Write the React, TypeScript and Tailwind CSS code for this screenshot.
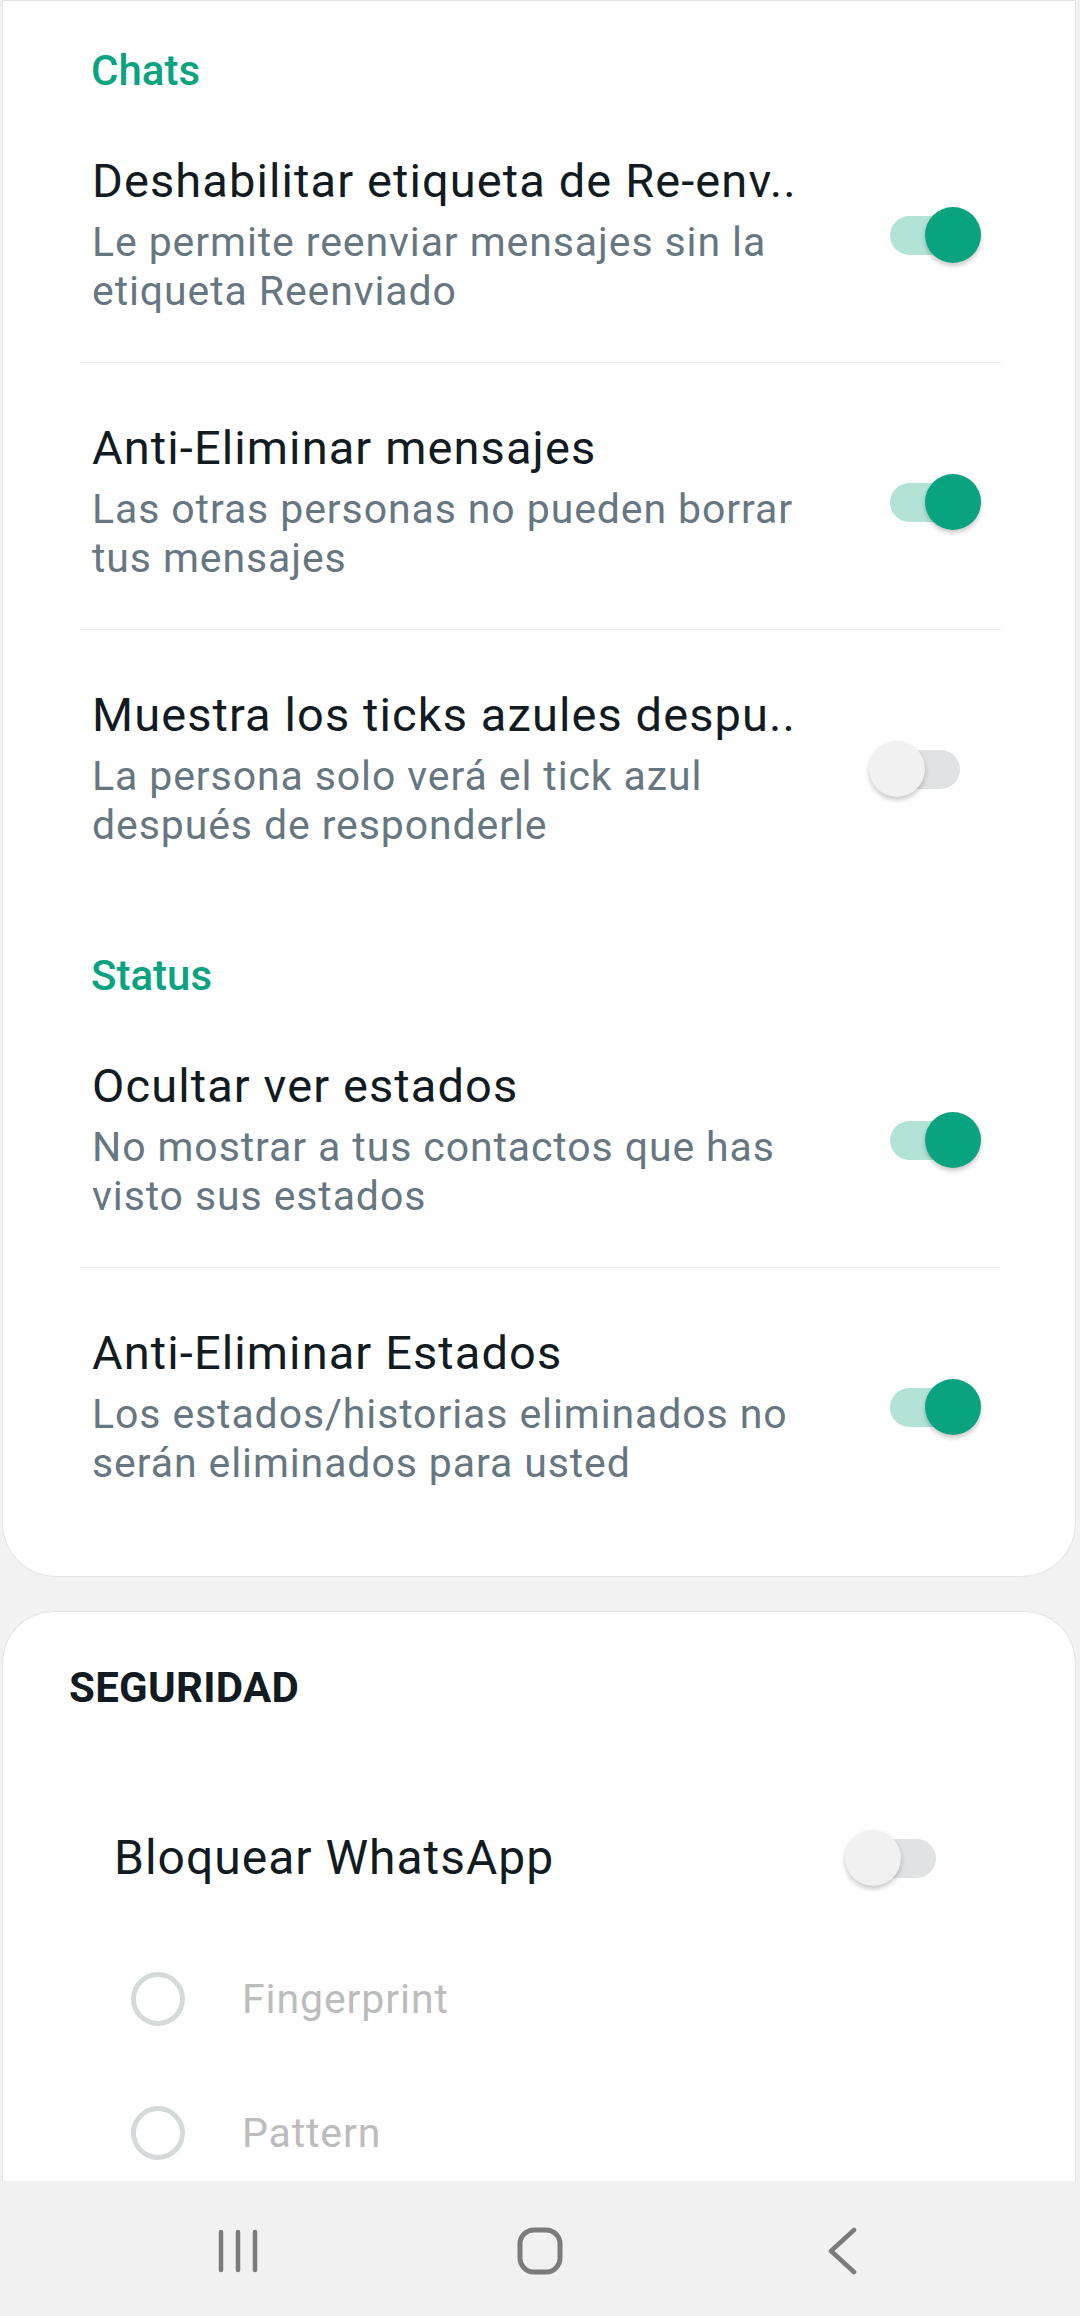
import React from "react";

function Switch({ on }: { on: boolean }) {
  return (
    <div className="relative w-[112px] h-[56px] shrink-0">
      <div
        className={`absolute left-[21px] top-[9px] w-[70px] h-[39px] rounded-full ${
          on ? "bg-[#b3e3d7]" : "bg-[#e0e2e3]"
        }`}
      />
      <div
        className={`absolute top-0 w-[56px] h-[56px] rounded-full shadow-[0_3px_5px_rgba(0,0,0,0.22)] ${
          on ? "left-[56px] bg-[#0aa37f]" : "left-0 bg-[#f1f1f1]"
        }`}
      />
    </div>
  );
}

function Row({ title, lines, on }: { title: string; lines: string[]; on: boolean }) {
  return (
    <div className="flex items-center pt-[57px] pb-[46px]">
      <div className="flex-1 min-w-0 pl-[89px]">
        <div className="text-[47px] leading-[56px] tracking-[1.1px] text-[#111b21] whitespace-nowrap">{title}</div>
        <div className="mt-[9px] text-[41px] leading-[49px] tracking-[0.9px] text-[#667781]">
          {lines.map((l) => (
            <div key={l} className="whitespace-nowrap">
              {l}
            </div>
          ))}
        </div>
      </div>
      <div className="mr-[94px]">
        <Switch on={on} />
      </div>
    </div>
  );
}

function Divider() {
  return <div className="h-px bg-[#ebebeb] ml-[77px] mr-[74px]" />;
}

function Header({ text }: { text: string }) {
  return (
    <div className="pl-[88px] text-[42px] leading-[50px] font-medium text-[#0aa37f]">{text}</div>
  );
}

function Radio({ label }: { label: string }) {
  return (
    <div className="flex items-center h-[50px]">
      <div className="ml-[128px] w-[54px] h-[54px] rounded-full border-[5px] border-[#d5d9da] shrink-0" />
      <div className="ml-[57px] text-[41px] leading-[50px] tracking-[0.9px] text-[#bcbcbc]">{label}</div>
    </div>
  );
}

export default function App() {
  return (
    <div className="h-[2316px] w-[1080px] flex flex-col bg-[#f2f2f2] overflow-hidden font-[Roboto,sans-serif]">
      <div className="flex-1 overflow-hidden">
        {/* Card 1 */}
        <div className="ml-[2px] mr-[4px] bg-white border border-[#e3e3e3] rounded-b-[54px] pt-[45px] pb-[42px]">
          <Header text="Chats" />
          <Row
            title="Deshabilitar etiqueta de Re-env.."
            lines={["Le permite reenviar mensajes sin la", "etiqueta Reenviado"]}
            on={true}
          />
          <Divider />
          <Row
            title="Anti-Eliminar mensajes"
            lines={["Las otras personas no pueden borrar", "tus mensajes"]}
            on={true}
          />
          <Divider />
          <Row
            title="Muestra los ticks azules despu.."
            lines={["La persona solo verá el tick azul", "después de responderle"]}
            on={false}
          />
          <div className="pt-[55px]">
            <Header text="Status" />
          </div>
          <Row
            title="Ocultar ver estados"
            lines={["No mostrar a tus contactos que has", "visto sus estados"]}
            on={true}
          />
          <Divider />
          <Row
            title="Anti-Eliminar Estados"
            lines={["Los estados/historias eliminados no", "serán eliminados para usted"]}
            on={true}
          />
        </div>

        {/* Card 2 */}
        <div className="mt-[34px] ml-[2px] mr-[4px] bg-white border border-[#e3e3e3] rounded-t-[52px] pt-[51px] pb-[60px]">
          <div className="pl-[66px] text-[42px] leading-[50px] font-bold tracking-[0.3px] text-[#111b21]">SEGURIDAD</div>
          <div className="flex items-center mt-[117px]">
            <div className="flex-1 pl-[111px] text-[48px] leading-[56px] tracking-[1px] text-[#111b21]">Bloquear WhatsApp</div>
            <div className="mr-[118px]">
              <Switch on={false} />
            </div>
          </div>
          <div className="mt-[88px]">
            <Radio label="Fingerprint" />
          </div>
          <div className="mt-[84px]">
            <Radio label="Pattern" />
          </div>
        </div>
      </div>

      {/* Nav bar */}
      <div className="h-[135px] shrink-0 bg-[#f1f1f1] grid grid-cols-3 px-[87px] pt-[4px]">
        <div className="flex items-center justify-center">
          <svg width="42" height="44" viewBox="0 0 42 44" fill="none" stroke="#7b7b7b" strokeWidth="4.5" strokeLinecap="round">
            <line x1="4" y1="3" x2="4" y2="41" />
            <line x1="21" y1="3" x2="21" y2="41" />
            <line x1="38" y1="3" x2="38" y2="41" />
          </svg>
        </div>
        <div className="flex items-center justify-center">
          <svg width="46" height="48" viewBox="0 0 46 48" fill="none" stroke="#7b7b7b" strokeWidth="5">
            <rect x="3" y="3" width="40" height="42" rx="14" />
          </svg>
        </div>
        <div className="flex items-center justify-center">
          <svg width="34" height="48" viewBox="0 0 34 48" fill="none" stroke="#7b7b7b" strokeWidth="4.5" strokeLinecap="round" strokeLinejoin="round">
            <polyline points="29,3 6,24 29,45" />
          </svg>
        </div>
      </div>
    </div>
  );
}
